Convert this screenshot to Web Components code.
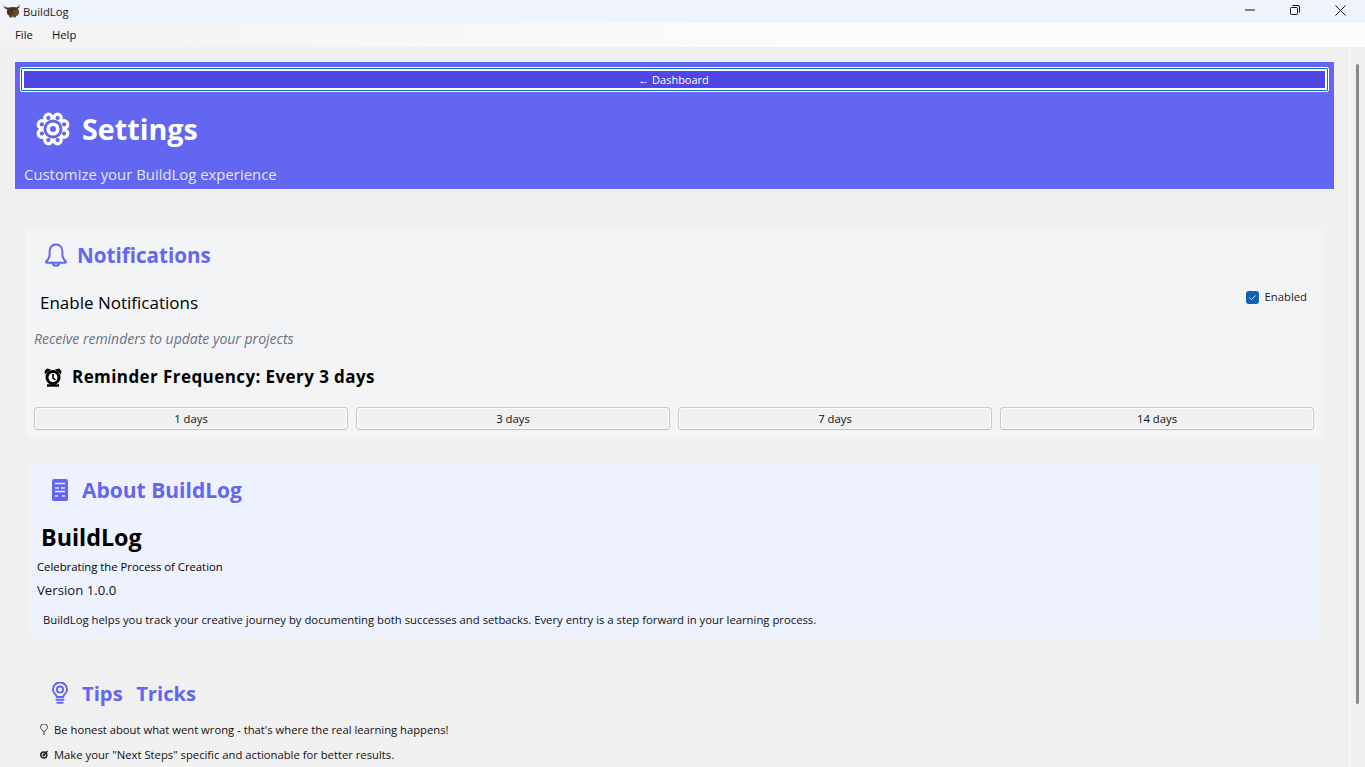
<!DOCTYPE html>
<html><head><meta charset="utf-8"><style>
html,body{margin:0;height:100%;overflow:hidden;background:#f0f0f0;font-family:"Open Sans","Noto Sans",sans-serif;color:#000}
body{display:flex;flex-direction:column;height:767px}
</style></head><body>
<win-titlebar></win-titlebar>
<win-menubar></win-menubar>
<app-view>
  <settings-header></settings-header>
  <notif-card></notif-card>
  <about-card></about-card>
  <tips-card></tips-card>
</app-view>
<script>
function def(name,html){customElements.define(name,class extends HTMLElement{constructor(){super();this.attachShadow({mode:'open'}).innerHTML=html}})}
const lobes=[0,45,90,135,180,225,270,315].map(a=>{const r=a*Math.PI/180;return `<circle cx="${(17+12*Math.cos(r+Math.PI/8)).toFixed(2)}" cy="${(17+12*Math.sin(r+Math.PI/8)).toFixed(2)}" r="3.700"/>`}).join('');
const gear=`<svg width="34" height="34" viewBox="0 0 34 34" fill="none" stroke="#fff" stroke-width="3.200">${lobes}<circle cx="17" cy="17" r="9.500" fill="#6366f1" stroke="none"/><circle cx="17" cy="17" r="4.800" stroke-width="3.600"/></svg>`;
const bell=`<svg width="26" height="26" viewBox="0 0 26 26" fill="none" stroke="#6366f1" stroke-width="2" stroke-linejoin="round"><path d="M13 2.500c-4.200 0-6.400 3.200-6.400 7v3.600c0 2.800-1.600 4.600-3.300 6.400-.5.600-.2 1.300.6 1.300h18.200c.8 0 1.100-.7.600-1.300-1.700-1.800-3.300-3.600-3.300-6.400V9.500c0-3.800-2.200-7-6.400-7z"/><path d="M9.500 21a3.600 3.600 0 0 0 7 0"/></svg>`;
const book=`<svg width="18" height="24" viewBox="0 0 18 24"><rect x="1" y="1" width="16" height="22" rx="2" fill="#6366f1"/><path d="M4 5.500h10M4 10h4M10 10h4M4 13.500h10M4 18h3M11 18h3" stroke="#e8eaff" stroke-width="1.500"/></svg>`;
const bulb=`<svg width="18" height="23" viewBox="0 0 20 26" fill="none" stroke="#6366f1" stroke-width="2.200"><path d="M6.500 17c0-2.500-4.500-4-4.500-8.500a8 8 0 0 1 16 0C18 13 13.500 14.500 13.500 17z"/><circle cx="10" cy="8.500" r="3.500"/><path d="M6 20h8M7 23.500h6" stroke-linecap="round"/></svg>`;
const clock=`<svg width="18" height="19" viewBox="0 0 18 19"><path d="M1 6.500 .5 3 3 .5 7 1.500zM17 6.500 17.500 3 15 .5 11 1.500z" fill="#000"/><circle cx="9" cy="9.500" r="6" fill="#fff" stroke="#000" stroke-width="3"/><path d="M9 6v4l2.500 2" stroke="#000" stroke-width="1.600" fill="none"/><path d="M3 17.500h12" stroke="#000" stroke-width="2.400"/></svg>`;

def('win-titlebar',`<style>:host{display:flex;align-items:flex-start;height:23px;background:#eff3fb;flex:none;padding-right:1px;box-sizing:border-box}
.logo{margin:4px 3px 0 2px;display:block}.t{font:11.300px/23px "Open Sans",sans-serif;color:#1a1a1a;flex:1}
.b{width:46px;height:20px;display:flex;align-items:center;justify-content:center}.b+.b{width:45px}.b:last-child{width:46px}
.m svg{margin-right:1px}.x svg{margin-right:2px}</style>
<svg class="logo" width="18" height="14" viewBox="0 0 18 14"><ellipse cx="11" cy="8" rx="6.200" ry="5" fill="#6b4a26"/><path d="M7 13l1-3 2 4zM14 13l-1-3-1 4z" fill="#5a3c1e"/><path d="M0 0C2 3 5 4 8 3.500L13 3.500C15 4 17 2.500 18 0L17 4 13 6 8 6.500 3 4.500z" fill="#3b3632"/><ellipse cx="8" cy="7.500" rx="3" ry="3.500" fill="#4e361d"/></svg>
<span class="t">BuildLog</span>
<span class="b"><svg width="10" height="2"><path d="M0 1h10" stroke="#111"/></svg></span>
<span class="b m"><svg width="10" height="10" viewBox="0 0 10 10" fill="none" stroke="#111"><rect x=".5" y="2.500" width="7" height="7" rx="1"/><path d="M2.500 .5H8a1.500 1.500 0 0 1 1.500 1.500V7.500"/></svg></span>
<span class="b x"><svg width="11" height="11" viewBox="0 0 11 11" fill="none" stroke="#111"><path d="M.5.500l10 10M10.500.500l-10 10"/></svg></span>`);

def('win-menubar',`<style>:host{display:flex;gap:1px;height:24px;background:linear-gradient(90deg,#f3f3f3 0,#f7f7f7 30%,#fcfcfc 60%,#fcfcfc 100%);flex:none;padding-left:6px}
span{padding:0 9px;font:11.300px/23px "Open Sans",sans-serif;color:#111}</style><span>File</span><span>Help</span>`);

def('app-view',`<style>:host{display:flex;flex:1;min-height:0;overflow:hidden}
.c{flex:1;min-width:0;padding:15px 0 0 15px;overflow:hidden;display:flex;flex-direction:column}
.sb{width:16px;border-left:1px solid #fafafa;background:#f0f0f0;flex:none;display:flex;justify-content:center;padding-top:17px;box-sizing:border-box}
.sb i{display:block;width:3px;height:640px;background:#8a8a8a;border-radius:2px}</style>
<div class="c"><slot></slot></div><div class="sb"><i></i></div>`);

def('settings-header',`<style>:host{display:block;width:1319px;height:127px;background:#6366f1;padding:5px 5px 0;box-sizing:border-box;color:#fff;flex:none}
button{display:block;width:100%;height:25px;box-sizing:border-box;background:#4f46e5;color:#fff;border:1px solid #fff;box-shadow:inset 0 0 0 1px #0f6cbd,inset 0 0 0 3px #fff;font:11px/19px "Open Sans",sans-serif;padding:0 2px 0 0;border-radius:2px}
.r{display:flex;align-items:center;gap:12px;margin:18px 0 0 16px}
svg{display:block}
h1{margin:0;font:700 28.700px/38px "Open Sans",sans-serif;color:#fff}
p{margin:16px 0 0 4px;font:14.900px/20px "Open Sans",sans-serif;color:#e0e7ff}
</style><button>← Dashboard</button><div class="r">${gear}<h1>Settings</h1></div><p>Customize your BuildLog experience</p>`);

def('notif-card',`<style>:host{display:block;width:1298px;height:209px;margin:40px 0 0 11px;background:#f3f4f6;box-sizing:border-box;padding:11px 10px 0 8px;flex:none}
svg{display:block}
.h{display:flex;align-items:center;gap:8px;margin-left:9px;height:30px}
h2{margin:0;font:700 20.600px/30px "Open Sans",sans-serif;color:#6366f1}
.e{display:flex;justify-content:space-between;margin:21px 0 0 6px;align-items:flex-start}
.en{font:17px/24px "Open Sans",sans-serif}
.ck{display:flex;align-items:center;gap:5px;font:11.300px/16px "Open Sans",sans-serif;color:#1a1a1a;margin:-2px 7px 0 0}
.box{width:13px;height:13px;border-radius:3px;background:#0f62b4;display:flex;align-items:center;justify-content:center}
.d{font:italic 14px/18px "Open Sans",sans-serif;color:#6b7280;margin-top:15px}
.f{display:flex;align-items:center;gap:10px;margin:17px 0 0 10px;font:700 17px/24px "Open Sans",sans-serif;letter-spacing:.42px}
.g{display:grid;grid-template-columns:repeat(4,1fr);gap:8px;margin-top:18px;width:1280px}
.g button{height:23px;box-sizing:border-box;background:#f0f0f0;border:1px solid #c9c9c9;border-bottom-color:#bbb;box-shadow:inset 0 0 0 1px #fdfdfd;border-radius:4px;font:11.300px/20px "Open Sans",sans-serif;color:#111;padding:0}
</style><div class="h">${bell}<h2>Notifications</h2></div>
<div class="e"><span class="en">Enable Notifications</span><span class="ck"><span class="box"><svg width="9" height="9" viewBox="0 0 9 9" fill="none" stroke="#cfe3f7" stroke-width="1"><path d="M1.500 4.700 3.500 6.700 7.500 2.500"/></svg></span>Enabled</span></div>
<div class="d">Receive reminders to update your projects</div>
<div class="f">${clock}<span>Reminder Frequency: Every 3 days</span></div>
<div class="g"><button>1 days</button><button>3 days</button><button>7 days</button><button>14 days</button></div>`);

def('about-card',`<style>:host{display:block;width:1291px;height:174px;margin:25px 0 0 14px;background:#eef2ff;box-sizing:border-box;padding:12px 0 0 8px;flex:none}
svg{display:block}
.h{display:flex;align-items:center;gap:13px;margin-left:14px;height:30px}
h2{margin:0;font:700 21px/30px "Open Sans",sans-serif;color:#6366f1}
.n{font:700 23.300px/32px "Open Sans",sans-serif;margin:16px 0 0 4px}
.s{font:11.300px/17px "Open Sans",sans-serif;margin:5px 0 0 0}
.v{font:13.200px/19px "Open Sans",sans-serif;margin:6px 0 0 0;color:#111}
.b{font:11.300px/17px "Open Sans",sans-serif;margin:11px 0 0 6px;color:#111}
</style><div class="h">${book}<h2>About BuildLog</h2></div>
<div class="n">BuildLog</div><div class="s">Celebrating the Process of Creation</div><div class="v">Version 1.0.0</div>
<div class="b">BuildLog helps you track your creative journey by documenting both successes and setbacks. Every entry is a step forward in your learning process.</div>`);

def('tips-card',`<style>:host{display:block;margin:41px 0 0 36px;flex:none}
svg{display:block}
.h{display:flex;align-items:center;gap:13px;height:30px;margin-bottom:13px}
h2{margin:0;font:700 20.200px/30px "Open Sans",sans-serif;color:#6366f1;white-space:pre;word-spacing:1.500px}
.t{display:flex;align-items:center;gap:6px;font:11.250px/17px "Open Sans",sans-serif;color:#111;margin:0 0 8px -11px}
</style><div class="h">${bulb}<h2>Tips  Tricks</h2></div>
<div class="t"><svg width="8" height="11" viewBox="0 0 8 11" fill="none" stroke="#444"><path d="M2.500 7c0-1-2-2-2-3.700a3.500 3.500 0 0 1 7 0C7.500 5 5.500 6 5.500 7z"/><path d="M3 9h2M3.500 10.500h1" stroke="#333"/></svg><span>Be honest about what went wrong - that's where the real learning happens!</span></div>
<div class="t"><svg width="8" height="9" viewBox="0 0 8 9" fill="none" stroke="#222"><circle cx="3.800" cy="5" r="3" stroke-width="1.500"/><circle cx="3.800" cy="5" r="1" fill="#222"/><path d="M4 5 7.500 1" stroke-width="1.300"/></svg><span>Make your "Next Steps" specific and actionable for better results.</span></div>`);
</script></body></html>
